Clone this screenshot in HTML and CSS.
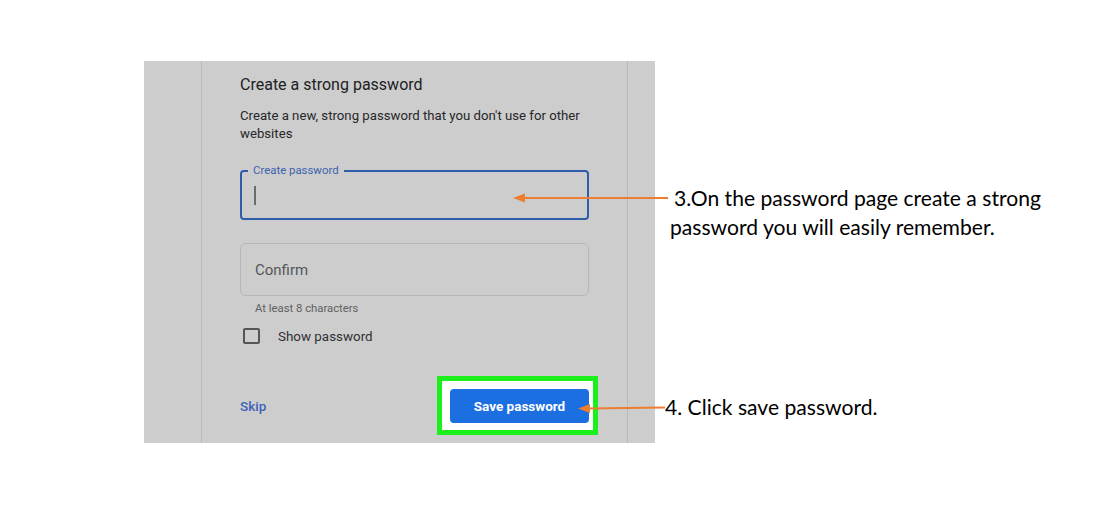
FILE: index.html
```html
<!DOCTYPE html>
<html lang="en">
<head>
<meta charset="utf-8">
<title>Create a strong password</title>
<link rel="stylesheet" href="styles.css">
</head>
<body>
<main class="stage">
  <section class="panel">
    <div class="card">
      <h1 class="title">Create a strong password</h1>
      <p class="desc">Create a new, strong password that you don't use for other websites</p>
      <div class="field field-active">
        <span class="field-label">Create password</span>
        <span class="caret"></span>
      </div>
      <div class="field field-idle">
        <span class="placeholder">Confirm</span>
      </div>
      <p class="hint">At least 8 characters</p>
      <label class="check"><span class="box"></span><span class="check-text">Show password</span></label>
      <div class="actions">
        <a class="skip">Skip</a>
        <span class="hl"><button class="save" type="button">Save password</button></span>
      </div>
    </div>
  </section>
  <aside class="notes">
    <p class="note note-1">3.On the password page create a strong password you will easily remember.</p>
    <p class="note note-2">4. Click save password.</p>
  </aside>
  <svg class="arrows" width="1120" height="521" viewBox="0 0 1120 521" aria-hidden="true">
    <line x1="522" y1="198" x2="668" y2="198" stroke="#ed7d31" stroke-width="2"/>
    <polygon points="513,198 525,193.5 525,202.5" fill="#ed7d31"/>
    <line x1="587" y1="408.5" x2="665" y2="407.5" stroke="#ed7d31" stroke-width="2"/>
    <polygon points="578,408.5 590,404 590,413" fill="#ed7d31"/>
  </svg>
</main>
</body>
</html>
```

FILE: styles.css
```css
* { box-sizing: border-box; }

html, body {
  margin: 0;
  padding: 0;
  background: #ffffff;
}

.stage {
  position: relative;
  width: 1120px;
  height: 521px;
  padding: 61px 0 0 144px;
  display: flex;
  align-items: flex-start;
  font-family: Roboto, "Liberation Sans", sans-serif;
}

.panel {
  width: 511px;
  height: 382px;
  background: #cdcdcd;
  padding-left: 57px;
  display: flex;
}

.card {
  width: 427px;
  height: 100%;
  border-left: 1px solid #b9b9b9;
  border-right: 1px solid #b9b9b9;
  padding: 14px 38px 0 38px;
  display: flex;
  flex-direction: column;
}

.title {
  margin: 0;
  font-size: 16px;
  line-height: 20px;
  font-weight: 400;
  color: #202124;
}

.desc {
  margin: 11.5px 0 0 0;
  font-size: 13.2px;
  line-height: 18px;
  color: #26272a;
}

.field {
  position: relative;
  width: 349px;
  display: flex;
  align-items: center;
  padding-left: 15px;
}

.field-active {
  margin-top: 27.5px;
  height: 50px;
  border: 2px solid #2f5bab;
  border-radius: 4px;
  padding-left: 12px;
}

.field-label {
  position: absolute;
  left: 6px;
  top: -9px;
  padding: 0 5px;
  background: #cdcdcd;
  font-size: 11.4px;
  line-height: 14px;
  color: #3b63b0;
}

.caret {
  width: 2px;
  height: 19px;
  background: #6b6b6b;
}

.field-idle {
  margin-top: 23px;
  height: 53px;
  border: 1px solid #b7b7b7;
  border-radius: 6px;
  padding-left: 14px;
}

.placeholder {
  font-size: 15px;
  color: #555758;
}

.hint {
  margin: 6px 0 0 15px;
  font-size: 11.3px;
  line-height: 14px;
  color: #616161;
}

.check {
  margin-top: 12px;
  display: flex;
  align-items: center;
  gap: 18px;
  padding-left: 3px;
  height: 16px;
}

.box {
  width: 17px;
  height: 16px;
  border: 2px solid #555555;
  border-radius: 2px;
}

.check-text {
  font-size: 13.4px;
  color: #303134;
}

.actions {
  margin-top: 45px;
  display: flex;
  justify-content: space-between;
  align-items: center;
  height: 34px;
}

.skip {
  font-size: 13.5px;
  font-weight: 500;
  color: #3a63b8;
}

.hl {
  position: relative;
  display: flex;
  isolation: isolate;
}

.hl::before {
  content: "";
  position: absolute;
  top: -13px;
  left: -13px;
  right: -9px;
  bottom: -12px;
  background: #ffffff;
  border: 5px solid #1cf01c;
  z-index: -1;
}

.save {
  width: 139px;
  height: 34px;
  border: 0;
  border-radius: 4px;
  background: #1c6fe0;
  color: #ffffff;
  font-family: Roboto, "Liberation Sans", sans-serif;
  font-size: 13.5px;
  font-weight: 700;
  padding: 0;
}

.notes {
  display: flex;
  flex-direction: column;
  padding-left: 15px;
  font-family: Lato, "Liberation Sans", sans-serif;
  color: #000000;
}

.note {
  margin: 0;
  font-size: 21.1px;
  line-height: 29px;
}

.note-1 {
  margin-top: 121.5px;
  width: 390px;
  text-indent: 4px;
}

.note-2 {
  margin-top: 151px;
  margin-left: -5px;
}

.arrows {
  position: absolute;
  left: 0;
  top: 0;
  pointer-events: none;
}
```
